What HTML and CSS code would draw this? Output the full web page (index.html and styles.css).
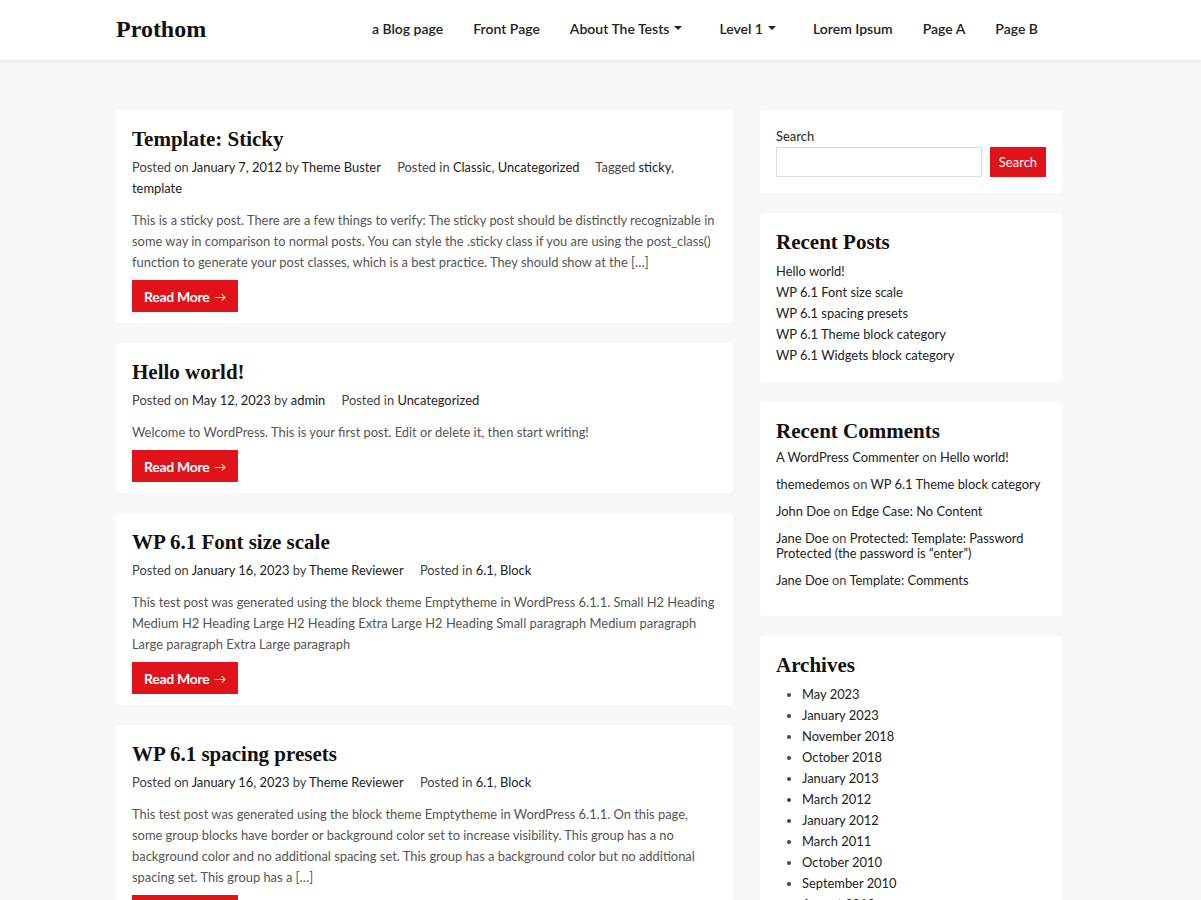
FILE: index.html
```html
<!DOCTYPE html>
<html lang="en">
<head>
<meta charset="utf-8">
<title>Prothom</title>
<link rel="stylesheet" href="styles.css">
</head>
<body>
<header class="site-header">
  <div class="container header-inner">
    <a class="logo" href="#">Prothom</a>
    <nav class="main-nav">
      <ul>
        <li><a href="#">a Blog page</a></li>
        <li><a href="#">Front Page</a></li>
        <li class="has-sub"><a href="#">About The Tests</a><span class="caret"></span></li>
        <li class="has-sub"><a href="#">Level 1</a><span class="caret"></span></li>
        <li><a href="#">Lorem Ipsum</a></li>
        <li><a href="#">Page A</a></li>
        <li><a href="#">Page B</a></li>
      </ul>
    </nav>
  </div>
</header>

<div class="container content">
  <main class="posts">
    <article class="card post">
      <h2 class="post-title"><a href="#">Template: Sticky</a></h2>
      <div class="meta">
        <span class="meta-item">Posted on <a href="#">January 7, 2012</a> by <a href="#">Theme Buster</a></span>
        <span class="meta-item">Posted in <a href="#">Classic</a>, <a href="#">Uncategorized</a></span>
        <span class="meta-item">Tagged <a href="#">sticky</a>, <a href="#">template</a></span>
      </div>
      <p class="excerpt">This is a sticky post. There are a few things to verify: The sticky post should be distinctly recognizable in some way in comparison to normal posts. You can style the .sticky class if you are using the post_class() function to generate your post classes, which is a best practice. They should show at the […]</p>
      <a class="btn" href="#">Read More <span class="arrow">→</span></a>
    </article>

    <article class="card post">
      <h2 class="post-title"><a href="#">Hello world!</a></h2>
      <div class="meta">
        <span class="meta-item">Posted on <a href="#">May 12, 2023</a> by <a href="#">admin</a></span>
        <span class="meta-item">Posted in <a href="#">Uncategorized</a></span>
      </div>
      <p class="excerpt">Welcome to WordPress. This is your first post. Edit or delete it, then start writing!</p>
      <a class="btn" href="#">Read More <span class="arrow">→</span></a>
    </article>

    <article class="card post">
      <h2 class="post-title"><a href="#">WP 6.1 Font size scale</a></h2>
      <div class="meta">
        <span class="meta-item">Posted on <a href="#">January 16, 2023</a> by <a href="#">Theme Reviewer</a></span>
        <span class="meta-item">Posted in <a href="#">6.1</a>, <a href="#">Block</a></span>
      </div>
      <p class="excerpt">This test post was generated using the block theme Emptytheme in WordPress 6.1.1. Small H2 Heading Medium H2 Heading Large H2 Heading Extra Large H2 Heading Small paragraph Medium paragraph Large paragraph Extra Large paragraph</p>
      <a class="btn" href="#">Read More <span class="arrow">→</span></a>
    </article>

    <article class="card post">
      <h2 class="post-title"><a href="#">WP 6.1 spacing presets</a></h2>
      <div class="meta">
        <span class="meta-item">Posted on <a href="#">January 16, 2023</a> by <a href="#">Theme Reviewer</a></span>
        <span class="meta-item">Posted in <a href="#">6.1</a>, <a href="#">Block</a></span>
      </div>
      <p class="excerpt">This test post was generated using the block theme Emptytheme in WordPress 6.1.1. On this page, some group blocks have border or background color set to increase visibility. This group has a no background color and no additional spacing set. This group has a background color but no additional spacing set. This group has a […]</p>
      <a class="btn" href="#">Read More <span class="arrow">→</span></a>
    </article>
  </main>

  <aside class="sidebar">
    <section class="card widget">
      <label class="search-label" for="s">Search</label>
      <form class="search-form">
        <input id="s" type="text" class="search-input">
        <button type="button" class="search-btn">Search</button>
      </form>
    </section>

    <section class="card widget">
      <h2 class="widget-title">Recent Posts</h2>
      <ul class="plain-list">
        <li><a href="#">Hello world!</a></li>
        <li><a href="#">WP 6.1 Font size scale</a></li>
        <li><a href="#">WP 6.1 spacing presets</a></li>
        <li><a href="#">WP 6.1 Theme block category</a></li>
        <li><a href="#">WP 6.1 Widgets block category</a></li>
      </ul>
    </section>

    <section class="card widget">
      <h2 class="widget-title">Recent Comments</h2>
      <ul class="comment-list">
        <li><a href="#">A WordPress Commenter</a> on <a href="#">Hello world!</a></li>
        <li><a href="#">themedemos</a> on <a href="#">WP 6.1 Theme block category</a></li>
        <li><a href="#">John Doe</a> on <a href="#">Edge Case: No Content</a></li>
        <li><a href="#">Jane Doe</a> on <a href="#">Protected: Template: Password Protected (the password is “enter”)</a></li>
        <li><a href="#">Jane Doe</a> on <a href="#">Template: Comments</a></li>
      </ul>
    </section>

    <section class="card widget">
      <h2 class="widget-title">Archives</h2>
      <ul class="bullet-list">
        <li><a href="#">May 2023</a></li>
        <li><a href="#">January 2023</a></li>
        <li><a href="#">November 2018</a></li>
        <li><a href="#">October 2018</a></li>
        <li><a href="#">January 2013</a></li>
        <li><a href="#">March 2012</a></li>
        <li><a href="#">January 2012</a></li>
        <li><a href="#">March 2011</a></li>
        <li><a href="#">October 2010</a></li>
        <li><a href="#">September 2010</a></li>
        <li><a href="#">August 2010</a></li>
        <li><a href="#">July 2010</a></li>
      </ul>
    </section>
  </aside>
</div>
</body>
</html>
```

FILE: styles.css
```css
* { box-sizing: border-box; }

html, body {
  margin: 0;
  padding: 0;
}

body {
  background: #f7f7f7;
  font-family: Lato, "Noto Sans", "Liberation Sans", sans-serif;
  font-size: 12.9px;
  line-height: 21px;
  color: #444;
}

a {
  color: #222;
  text-decoration: none;
}

.container {
  width: 946px;
  margin: 0 139px 0 116px;
}

/* Header */
.site-header {
  background: #fff;
  height: 61px;
  box-shadow: 0 1px 3px rgba(0, 0, 0, 0.05);
  border-bottom: 1px solid #eee;
}

.header-inner {
  display: flex;
  align-items: center;
  justify-content: space-between;
  height: 60px;
}

.logo {
  font-family: "Liberation Serif", "Times New Roman", serif;
  font-weight: 700;
  font-size: 24px;
  color: #111;
  margin-top: -2px;
}

.main-nav ul {
  list-style: none;
  margin: 0;
  padding: 0 9px 0 0;
  display: flex;
  align-items: center;
}

.main-nav li {
  padding: 0 15px;
  display: flex;
  align-items: center;
  margin-top: -4px;
}

.main-nav li.has-sub {
  padding-right: 22px;
}

.main-nav a {
  font-weight: 600;
  font-size: 14px;
  color: #222;
}

.caret {
  display: inline-block;
  width: 0;
  height: 0;
  margin-left: 5px;
  border-left: 4px solid transparent;
  border-right: 4px solid transparent;
  border-top: 4px solid #222;
}

/* Content */
.content {
  display: flex;
  align-items: flex-start;
  gap: 27px;
  padding-top: 49px;
}

.posts {
  width: 617px;
  display: flex;
  flex-direction: column;
  gap: 20px;
}

.sidebar {
  width: 302px;
  display: flex;
  flex-direction: column;
  gap: 20px;
}

.card {
  background: #fff;
  border-radius: 4px;
}

.post {
  padding: 16px 16px 11px;
}

.post-title,
.widget-title {
  font-family: "Liberation Serif", "Times New Roman", serif;
  font-weight: 700;
  font-size: 21px;
  line-height: 27px;
  margin: 0 0 4px;
  color: #111;
}

.post-title a { color: #111; }

.meta {
  color: #444;
}

.meta-item {
  margin-right: 13px;
}

.meta a { color: #222; }

.excerpt {
  margin: 11px 0 7px;
  color: #555;
}

.btn {
  display: inline-flex;
  align-items: center;
  height: 32px;
  padding: 0 12px;
  background: #e0131b;
  color: #fff;
  font-weight: 700;
  font-size: 14px;
  letter-spacing: -0.3px;
}

.btn .arrow {
  margin-left: 5px;
  font-weight: 400;
  font-size: 12px;
}

/* Widgets */
.widget {
  padding: 16px;
}

.search-label {
  display: block;
  color: #333;
  font-weight: 500;
}

.search-form {
  display: flex;
  gap: 8px;
}

.search-input {
  width: 206px;
  height: 30px;
  border: 1px solid #ddd;
  border-radius: 0;
  padding: 0 6px;
  font: inherit;
}

.search-btn {
  height: 30px;
  width: 56px;
  border: 0;
  background: #e0131b;
  color: #fff;
  font: inherit;
  font-size: 13px;
  padding: 0;
}

.widget-title {
  margin-bottom: 5px;
}

.plain-list,
.comment-list,
.bullet-list {
  margin: 0;
  padding: 0;
  list-style: none;
}

.plain-list a,
.comment-list a,
.bullet-list a {
  color: #222;
}

.comment-list li {
  line-height: 15px;
  margin-bottom: 12px;
}

.comment-list { margin-top: 5px; }

.bullet-list {
  list-style: disc;
  padding-left: 26px;
}

.bullet-list li::marker {
  font-size: 12px;
}
```
